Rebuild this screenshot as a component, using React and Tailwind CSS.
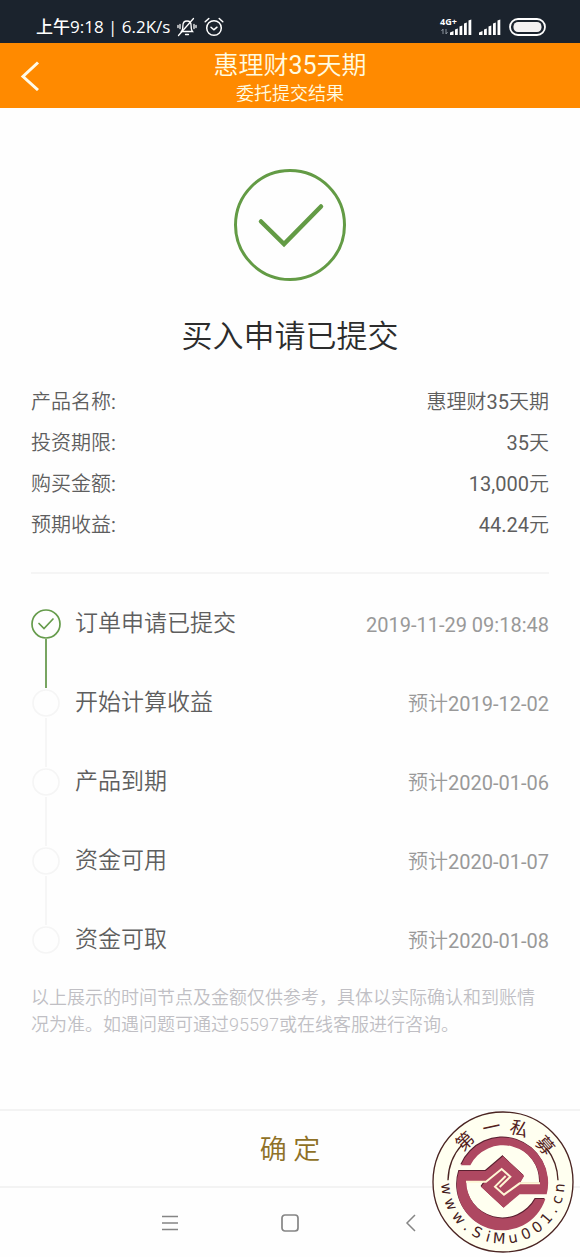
import React from "react";
import clsx from "clsx";

const details = [
    { label: "产品名称:", value: "惠理财35天期" },
    { label: "投资期限:", value: "35天" },
    { label: "购买金额:", value: "13,000元" },
    { label: "预期收益:", value: "44.24元" },
];

const steps = [
    { title: "订单申请已提交", date: "2019-11-29 09:18:48", done: true },
    { title: "开始计算收益", date: "预计2019-12-02" },
    { title: "产品到期", date: "预计2020-01-06" },
    { title: "资金可用", date: "预计2020-01-07" },
    { title: "资金可取", date: "预计2020-01-08" },
];

// glyph + angle around the badge centre
const badgeTop = [["第", -43], ["一", -12], ["私", 17], ["募", 49]];
const badgeBottom = [
    ["w", 83], ["w", 67], ["w", 51], [".", 39], ["S", 27], ["i", 15], ["M", 4],
    ["u", -10], ["0", -24], ["0", -37], ["1", -50], [".", -61], ["c", -72], ["n", -84],
];

// latin digits need a heavier weight than the hanzi beside them
const Mixed = ({ text }) =>
    text.split(/([\d:][\d.,:\- ]*)/).filter(Boolean).map((part, index) => (
        <span key={index} className={/^[\d:]/.test(part) ? "font-normal" : undefined}>{part}</span>
    ));

const Signal = () => (
    <svg width="22" height="16" viewBox="0 0 22 16" fill="#fff">
        <path d="M0 16V13.500L3.500 12V16Z" />
        <path d="M5 16V10.500L7.800 9.500V16Z" />
        <path d="M9.500 16V7.500L12.300 6.500V16Z" />
        <path d="M14 16V4.500L16.800 3.500V16Z" />
        <path d="M18.500 16V1.500L21.300 .5V16Z" />
    </svg>
);

const StatusBar = () => (
    <div className="flex h-[43px] items-center justify-between bg-[#1b232d] pr-[34px] pl-9 pt-2.5 text-white">
        <div className="flex items-center gap-[7px]">
            <span className="font-['Open_Sans','Noto_Sans_CJK_SC',sans-serif] text-[17px] leading-6 font-medium whitespace-pre">上午9:18 | 6.2K/s</span>
            <svg width="20" height="20" viewBox="0 0 20 20" fill="none" stroke="#fff" strokeWidth="1.300" strokeLinecap="round">
                <path d="M4.500 14.500h11c-1.200-1.300-1.400-2.700-1.400-6C14.100 5.500 12.500 4 10 4S5.900 5.500 5.900 8.500c0 3.300-.2 4.700-1.400 6Z" />
                <path d="M8.500 17.500h3M1.500 18.500 16.500 1.500M3 7.500v4M1 8.500v2M17 7.500v4M19 8.500v2" />
            </svg>
            <svg width="20" height="20" viewBox="0 0 20 20" fill="none" stroke="#fff" strokeWidth="1.500" strokeLinecap="round" strokeLinejoin="round">
                <circle cx="10" cy="11" r="7.300" />
                <path d="M1.200 4.800 4.800 1.500M18.800 4.800 15.200 1.500M7 10.200l2.800 2.600 3.200-2.600" />
            </svg>
        </div>
        <div className="flex items-center">
            <svg width="14" height="18" viewBox="0 0 14 18" className="overflow-visible">
                <text x="0" y="7" fontFamily="Open Sans, sans-serif" fontSize="9" fontWeight="700" fill="#fff">4G+</text>
                <path d="M3 16v-5l-1.500 2M6 11v5l1.500-2" fill="none" stroke="#8b939c" />
            </svg>
            <div className="mr-[7px] -ml-1"><Signal /></div>
            <div className="mr-2"><Signal /></div>
            <svg width="37" height="18" viewBox="0 0 37 18">
                <rect x="1" y="1" width="35" height="16" rx="8" fill="none" stroke="#fff" strokeWidth="1.800" />
                <rect x="4.500" y="4" width="28" height="10" rx="4.500" fill="#f3f1f1" />
            </svg>
        </div>
    </div>
);

const Header = () => (
    <header className="grid h-[65px] grid-cols-[60px_1fr_60px] items-center bg-[#ff8a00] text-[#fffbe0]">
        <button aria-label="返回" className="flex h-full items-center pl-5">
            <svg width="20" height="30" viewBox="0 0 20 30" fill="none" stroke="#fffbe8" strokeWidth="3">
                <path d="M18 1.500 3 15.500 18 29" />
            </svg>
        </button>
        <div className="pt-1 text-center">
            <h1 className="text-[25px] leading-8"><Mixed text="惠理财35天期" /></h1>
            <p className="text-lg leading-6">委托提交结果</p>
        </div>
    </header>
);

const Badge = () => (
    <svg className="absolute right-1.5 bottom-1 size-[142px]" viewBox="-1 -1 426 426" fontWeight="400">
        <circle cx="212" cy="212" r="210" fill="#fffff0" stroke="#4a2422" strokeWidth="4" />
        <path d="M47 207A165 165 0 0 1 89 100M377 207A165 165 0 0 0 342 110" fill="none" stroke="#4a2422" strokeWidth="4" />
        {badgeTop.map(([char, angle]) => (
            <text key={char} x="212" y="64" textAnchor="middle" transform={`rotate(${angle} 212 212)`} fontFamily="Noto Sans CJK SC, sans-serif" fontSize="54" fill="#54211c">{char}</text>
        ))}
        {badgeBottom.map(([char, angle], index) => (
            <text key={index} x="212" y="397" textAnchor="middle" transform={`rotate(${angle} 212 212)`} fontFamily="DejaVu Sans, sans-serif" fontSize="44" fill="#45211d">{char}</text>
        ))}
        <g transform="translate(67 67)">
            <g transform="translate(-2 -3)" fill="#5a2030">
                <path d="M19 95A136 136 0 0 1 276 182H195L147 222 80 160 145 68 208 127 195 150H255A110 110 0 0 0 47 95Z" />
                <path d="M13 112H93L145 68 208 127 147 222 80 160 93 143H35A110 110 0 0 0 242 196H272A136 136 0 0 1 13 112Z" />
            </g>
            <g fill="#ae4861">
                <path d="M19 95A136 136 0 0 1 276 182H195L147 222 80 160 145 68 208 127 195 150H255A110 110 0 0 0 47 95Z" />
                <path d="M13 112H93L145 68 208 127 147 222 80 160 93 143H35A110 110 0 0 0 242 196H272A136 136 0 0 1 13 112Z" />
            </g>
            <g fill="none" stroke="#fff8d5" strokeWidth="6">
                <path d="M34 144H94L141 106 167 129 135 160" />
                <path d="M256 149H195L148 183 121 159 153 127" />
            </g>
        </g>
    </svg>
);

const Step = ({ title, date, done, last }) => (
    <li className="flex h-[79px] items-stretch">
        <div className="flex w-[30px] flex-col items-center">
            <div className="h-6" />
            <svg className="shrink-0" width="30" height="30" viewBox="0 0 30 30" fill="none">
                <circle cx="15" cy="15" r={done ? 14 : 13} stroke={done ? "#659b4b" : "#f5f5f5"} strokeWidth="1.700" />
                {done && <path d="M8 14.500 13 19.500 22 10" stroke="#659b4b" strokeWidth="1.700" strokeLinecap="round" />}
            </svg>
            {!last && <div className={clsx("-mb-6 w-0.5 flex-1", done ? "bg-[#78a562]" : "bg-[#f6f6f6]")} />}
        </div>
        <div className="ml-3.5 flex flex-1 items-center justify-between">
            <span className="text-[23px] text-[#5e5e5e]">{title}</span>
            <time className="text-xl text-[#999]"><Mixed text={date} /></time>
        </div>
    </li>
);

const App = () => {
    return (
        <div lang="zh-CN" className="relative flex min-h-screen flex-col bg-[#fefefe] font-['Roboto','Noto_Sans_CJK_SC',sans-serif] font-[350]">
            <StatusBar />
            <Header />
            <main className="flex flex-1 flex-col px-[31px] pt-[61px]">
                <svg className="mx-auto" width="112" height="112" viewBox="0 0 112 112" fill="none" stroke="#639b45">
                    <circle cx="56" cy="56" r="54.500" strokeWidth="3" />
                    <path d="M27 52.500 50 75 87 37.500" strokeWidth="4.500" strokeLinecap="round" />
                </svg>
                <h2 className="mt-9 text-center text-[31px] leading-10 text-[#2c2c2c]">买入申请已提交</h2>
                <dl className="mt-6 border-b-2 border-[#f5f5f5] pb-[27px] text-xl text-[#5e5e5e]">
                    {details.map((item) => (
                        <div key={item.label} className="flex h-[41px] items-center justify-between">
                            <dt><Mixed text={item.label} /></dt>
                            <dd><Mixed text={item.value} /></dd>
                        </div>
                    ))}
                </dl>
                <ol className="mt-[11px]">
                    {steps.map((step, index) => (
                        <Step key={step.title} {...step} last={index === steps.length - 1} />
                    ))}
                </ol>
                <p className="mt-1 text-lg leading-[27px] text-[#c0bfc4]">
                    以上展示的时间节点及金额仅供参考，具体以实际确认和到账情况为准。如遇问题可通过95597或在线客服进行咨询。
                </p>
            </main>
            <button className="h-[79px] border-y-2 border-[#f3f3f3] pt-1 text-[27px] text-[#8f7126]">确 定</button>
            <nav className="flex h-[69px] items-center justify-center gap-[102px] text-[#858585]">
                <button aria-label="菜单">
                    <svg width="18" height="18" viewBox="0 0 18 18" fill="none" stroke="currentColor" strokeWidth="1.500">
                        <path d="M1 2.500h16M1 9h16M1 15.500h16" />
                    </svg>
                </button>
                <button aria-label="主页">
                    <svg width="18" height="18" viewBox="0 0 18 18" fill="none" stroke="currentColor" strokeWidth="1.700">
                        <rect x="1" y="1" width="16" height="16" rx="3" />
                    </svg>
                </button>
                <button aria-label="后退">
                    <svg width="18" height="18" viewBox="0 0 18 18" fill="none" stroke="currentColor" strokeWidth="1.500">
                        <path d="M14 1 6 9l8 8" />
                    </svg>
                </button>
            </nav>
            <Badge />
        </div>
    );
};

export default App;
